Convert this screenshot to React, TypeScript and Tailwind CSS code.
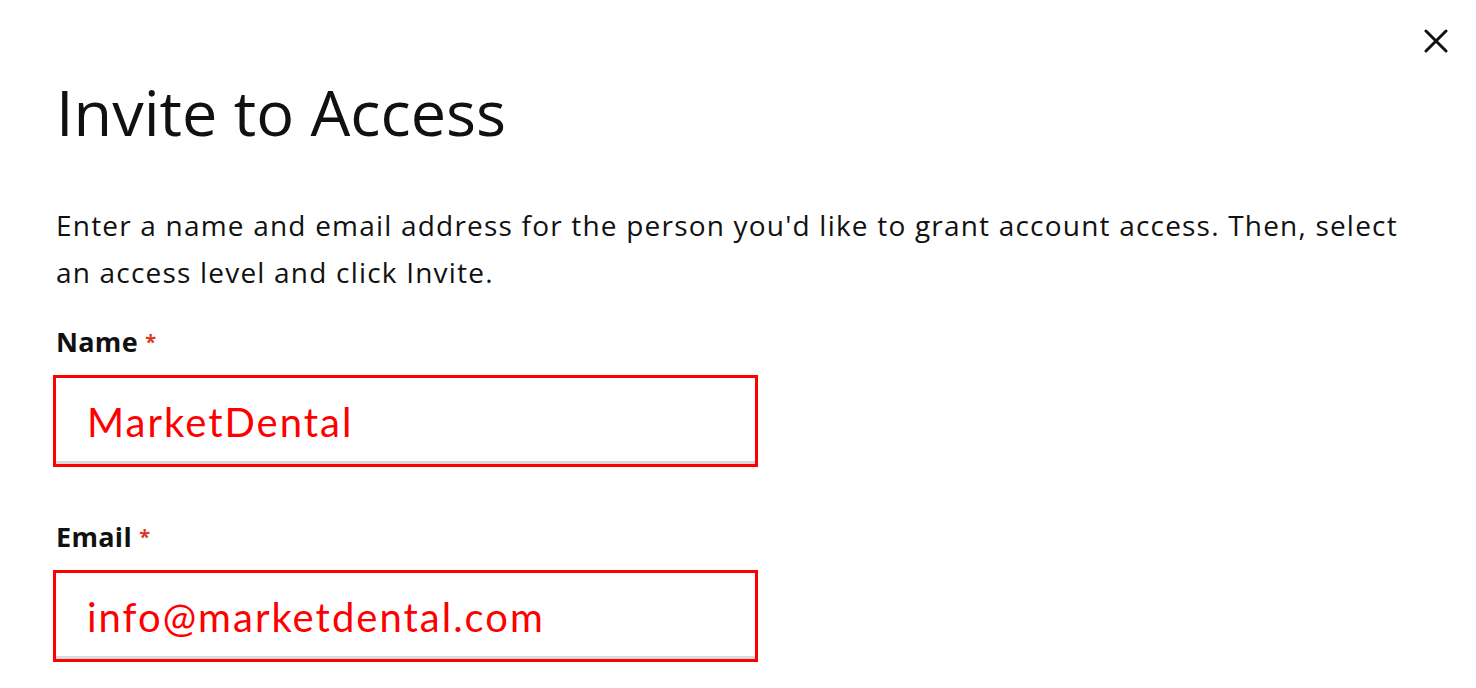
import * as React from 'react';

const Field = ({ label, value }: { label: string; value: string }) => (
  <div className="flex flex-col">
    <label className="text-[27px] font-bold text-[#111] leading-[34px] mb-[16px] tracking-[0.3px]">
      {label} <span className="text-[#d93a1f] text-[20px] align-top">*</span>
    </label>
    <div className="w-[705px] h-[92px] -ml-[3px] border-[3px] border-[#ff0000] bg-white">
      <div className="h-full w-full border-b-[3px] border-[#d8dbdc] flex items-center pl-[31px]">
        <span className="text-[40px] text-[#ff0000] font-['Lato',sans-serif] leading-none pt-[4px] tracking-[2px]">
          {value}
        </span>
      </div>
    </div>
  </div>
);

export default function App() {
  return (
    <div className="w-[1476px] h-[688px] bg-white overflow-hidden relative font-['Open_Sans',sans-serif] text-[#111]">
      <button className="absolute right-[26px] top-[27px] w-[28px] h-[28px] flex items-center justify-center" aria-label="Close">
        <svg width="24" height="24" viewBox="0 0 24 24" fill="none" stroke="#111" strokeWidth="3" strokeLinecap="round">
          <path d="M2 2 L22 22 M22 2 L2 22" />
        </svg>
      </button>
      <div className="pl-[56px] pr-[30px] pt-[72px]">
        <h1 className="text-[63px] font-normal leading-[80px]">Invite to Access</h1>
        <p className="mt-[50px] text-[28px] leading-[47px] tracking-[1.2px] max-w-[1360px]">
          Enter a name and email address for the person you'd like to grant account access. Then, select an access level and click Invite.
        </p>
        <div className="mt-[29px] flex flex-col gap-[53px]">
          <Field label="Name" value="MarketDental" />
          <Field label="Email" value="info@marketdental.com" />
        </div>
      </div>
    </div>
  );
}
